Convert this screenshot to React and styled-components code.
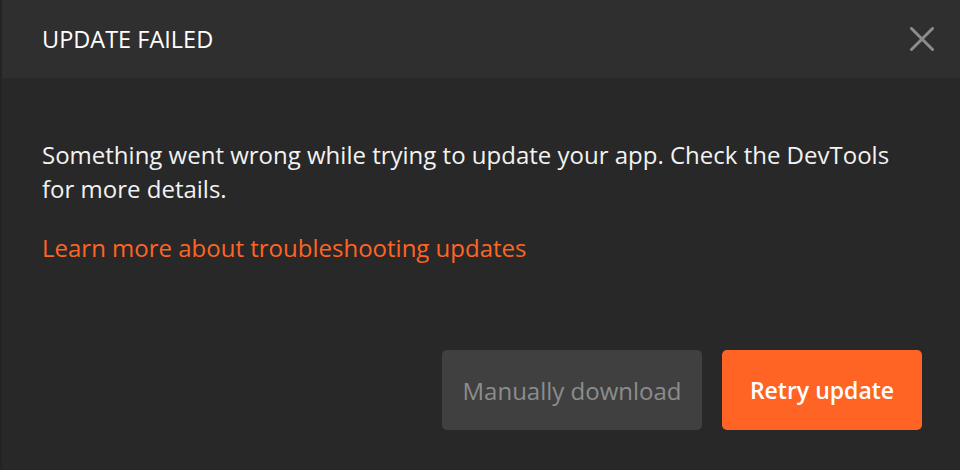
import React from 'react';
import styled, { createGlobalStyle } from 'styled-components';

const Global = createGlobalStyle`
  html, body {
    margin: 0;
    padding: 0;
    background: #282828;
  }
  body {
    font-family: "Open Sans", "Noto Sans", sans-serif;
  }
`;

const Dialog = styled.div`
  width: 960px;
  height: 470px;
  display: flex;
  flex-direction: column;
  background: #282828;
  border-left: 2px solid #232323;
  box-sizing: border-box;
`;

const Header = styled.div`
  height: 78px;
  flex-shrink: 0;
  display: flex;
  align-items: center;
  justify-content: space-between;
  padding: 0 26px 0 40px;
  background: #2f2f2f;
`;

const Title = styled.h1`
  margin: 0;
  font-size: 23.5px;
  font-weight: 400;
  color: #ffffff;
`;

const CloseButton = styled.button`
  border: 0;
  background: none;
  padding: 0;
  width: 24px;
  height: 24px;
  display: flex;
  cursor: pointer;
`;

const Body = styled.div`
  flex: 1;
  display: flex;
  flex-direction: column;
  padding: 60px 38px 40px 40px;
`;

const Message = styled.p`
  margin: 0;
  font-size: 24px;
  line-height: 34px;
  color: #f2f2f2;
`;

const Link = styled.a`
  margin-top: 25px;
  font-size: 24px;
  line-height: 34px;
  color: #ff6424;
  text-decoration: none;
`;

const Footer = styled.div`
  margin-top: auto;
  display: flex;
  justify-content: flex-end;
  gap: 20px;
`;

const Button = styled.button`
  height: 80px;
  border: 0;
  border-radius: 5px;
  padding: 0;
  width: ${({ $width }) => $width}px;
  font-family: inherit;
  font-size: ${({ $primary }) => ($primary ? 23 : 24)}px;
  font-weight: ${({ $primary }) => ($primary ? 600 : 400)};
  color: ${({ $primary }) => ($primary ? '#ffffff' : '#8c8c8c')};
  background: ${({ $primary }) => ($primary ? '#ff6424' : '#404040')};
  cursor: pointer;
`;

const CloseIcon = () => (
  <svg width="24" height="24" viewBox="0 0 24 24">
    <path d="M1.5 1.5 L22.5 22.5 M22.5 1.5 L1.5 22.5" stroke="#8c8c8c" strokeWidth="3" strokeLinecap="round" />
  </svg>
);

export default function App() {
  return (
    <>
      <Global />
      <Dialog>
        <Header>
          <Title>UPDATE FAILED</Title>
          <CloseButton aria-label="Close">
            <CloseIcon />
          </CloseButton>
        </Header>
        <Body>
          <Message>
            Something went wrong while trying to update your app. Check the DevTools for more details.
          </Message>
          <Link href="#">Learn more about troubleshooting updates</Link>
          <Footer>
            <Button $width={260}>Manually download</Button>
            <Button $width={200} $primary>Retry update</Button>
          </Footer>
        </Body>
      </Dialog>
    </>
  );
}
